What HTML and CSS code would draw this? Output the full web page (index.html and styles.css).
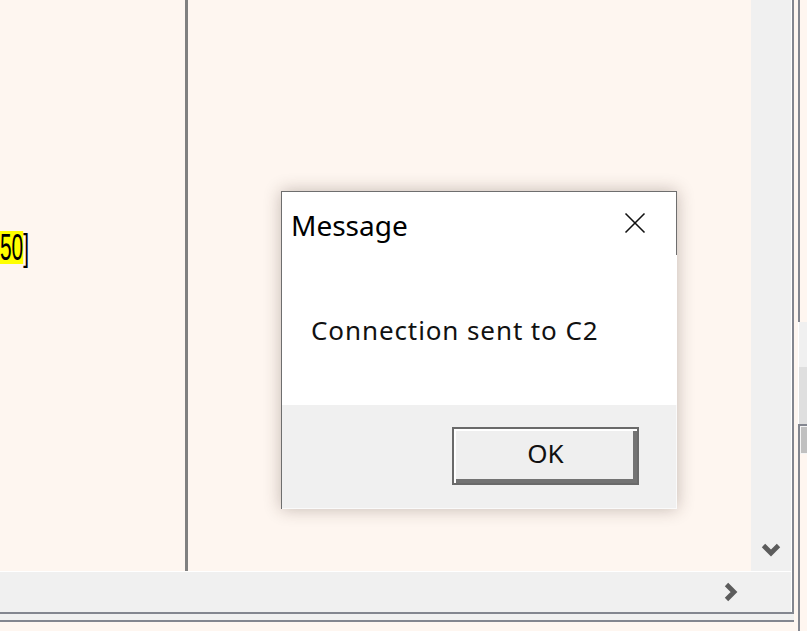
FILE: index.html
```html
<!DOCTYPE html>
<html>
<head>
<meta charset="utf-8">
<link rel="stylesheet" href="styles.css">
</head>
<body>
<div class="screen">
  <div class="left-col">
    <div class="frame">
      <div class="content">
        <div class="pane-left">
          <div class="code"><span class="hl">50</span>]</div>
        </div>
        <div class="divider"></div>
        <div class="pane-right"></div>
      </div>
      <div class="vscroll">
        <svg class="chev-down" width="20" height="14" viewBox="0 0 20 14"><polyline points="2.5,2.5 10,10 17.5,2.5" fill="none" stroke="#5c5c5c" stroke-width="4.8" stroke-linejoin="miter"/></svg>
      </div>
      <div class="hscroll">
        <div class="arrow-box">
          <svg width="14" height="20" viewBox="0 0 14 20"><polyline points="2.5,2.5 10,10 2.5,17.5" fill="none" stroke="#5c5c5c" stroke-width="4.8" stroke-linejoin="miter"/></svg>
        </div>
      </div>
      <div class="corner"></div>
    </div>
    <div class="strip"></div>
    <div class="tail"></div>
  </div>
  <div class="right-col">
    <div class="rc-a"></div>
    <div class="rc-b"></div>
    <div class="rc-c"></div>
    <div class="rc-d"><div class="rc-thumb"></div></div>
    <div class="rc-e"></div>
  </div>
</div>

<div class="dialog">
  <div class="dlg-title">
    <span class="dlg-caption">Message</span>
    <div class="dlg-close">
      <svg width="22" height="22" viewBox="0 0 22 22"><line x1="1.5" y1="1.5" x2="20.5" y2="20.5" stroke="#111" stroke-width="1.6"/><line x1="20.5" y1="1.5" x2="1.5" y2="20.5" stroke="#111" stroke-width="1.6"/></svg>
    </div>
  </div>
  <div class="dlg-body">
    <span class="dlg-text">Connection sent to C2</span>
  </div>
  <div class="dlg-footer">
    <div class="ok-btn">OK</div>
  </div>
</div>
</body>
</html>
```

FILE: styles.css
```css
html, body {
  margin: 0;
  padding: 0;
}
body {
  width: 807px;
  height: 631px;
  overflow: hidden;
  background: #fef6f0;
  font-family: "Noto Sans", "Open Sans", sans-serif;
  position: relative;
}
.screen {
  display: flex;
  height: 631px;
}
.left-col {
  width: 798px;
  display: flex;
  flex-direction: column;
}
.frame {
  width: 794px;
  height: 614px;
  box-sizing: border-box;
  display: grid;
  grid-template-columns: 751px 40px;
  grid-template-rows: 571px 40px;
  row-gap: 1px;
  padding-right: 1px;
  background: #ffffff;
  border-right: 2px solid #83868f;
  border-bottom: 2px solid #83868f;
}
.content {
  display: grid;
  grid-template-columns: 185px 3px 1fr;
  background: #fef6f0;
  overflow: hidden;
}
.pane-left {
  overflow: hidden;
}
.code {
  margin-top: 231px;
  font-family: "Liberation Sans", Arial, sans-serif;
  font-size: 36px;
  line-height: 33px;
  color: #000;
  transform: scaleX(0.58);
  transform-origin: left top;
  white-space: nowrap;
}
.hl {
  display: inline-block;
  height: 33px;
  background: #ffff00;
}
.divider {
  background: #808080;
}
.pane-right {
  background: #fef6f0;
}
.vscroll {
  background: #f0f0f0;
  display: flex;
  flex-direction: column;
  justify-content: flex-end;
  align-items: center;
  padding-bottom: 14px;
  box-sizing: border-box;
}
.hscroll {
  background: #f0f0f0;
  display: flex;
  justify-content: flex-end;
}
.arrow-box {
  width: 40px;
  display: flex;
  align-items: center;
  justify-content: center;
}
.corner {
  background: #f0f0f0;
}
.strip {
  width: 794px;
  height: 6px;
  background: #f0f0f0;
  border-bottom: 2px solid #83868f;
}
.tail {
  flex: 1;
}
.right-col {
  width: 9px;
  display: flex;
  flex-direction: column;
}
.rc-a {
  height: 322px;
  border-left: 2px solid #83868f;
  background: #fef6f0;
}
.rc-b {
  height: 45px;
  background: #f0f0f0;
  border-left: 1px solid #ffffff;
}
.rc-c {
  height: 57px;
  background: #dfdfdf;
  border-left: 1px solid #ffffff;
}
.rc-d {
  border-top: 2px solid #83868f;
  border-left: 2px solid #83868f;
  padding: 1px 0 1px 1px;
  background: #f4f4f4;
}
.rc-thumb {
  height: 26px;
  background: #c0c0c0;
}
.rc-e {
  flex: 1;
  border-left: 2px solid #83868f;
  background: #fef6f0;
}

/* dialog */
.dialog {
  position: absolute;
  left: 281px;
  top: 191px;
  width: 396px;
  height: 318px;
  box-sizing: border-box;
  border-left: 1px solid #6e6e6e;
  border-top: 1px solid #6e6e6e;
  background: #ffffff;
  display: flex;
  flex-direction: column;
  box-shadow: 0 0 16px rgba(60, 40, 30, 0.3);
}
.dlg-title {
  height: 63px;
  display: flex;
  align-items: center;
  justify-content: space-between;
  padding-left: 9px;
  border-right: 1px solid #6e6e6e;
}
.dlg-caption {
  font-size: 28px;
  color: #000;
  line-height: 1;
  margin-top: 2px;
}
.dlg-close {
  width: 70px;
  margin-right: 6px;
  display: flex;
  justify-content: center;
  align-items: center;
  margin-top: -1px;
}
.dlg-body {
  flex: 1;
  display: flex;
  align-items: center;
  padding-left: 29px;
}
.dlg-text {
  font-size: 26px;
  color: #111;
  letter-spacing: 0.9px;
}
.dlg-footer {
  height: 104px;
  background: #f0f0f0;
  display: flex;
  justify-content: flex-end;
  align-items: flex-start;
  padding-top: 22px;
  padding-right: 37px;
  box-sizing: border-box;
  border-bottom: 1px solid #fafafa;
  border-right: 1px solid #fafafa;
}
.ok-btn {
  width: 187px;
  height: 58px;
  box-sizing: border-box;
  border: 2px solid #6a6a6a;
  box-shadow: inset 2px 2px 0 #ffffff, inset -4px -4px 0 #737373;
  background: #efefef;
  display: flex;
  align-items: center;
  justify-content: center;
  font-size: 26px;
  color: #111;
  padding-bottom: 6px;
}
```
